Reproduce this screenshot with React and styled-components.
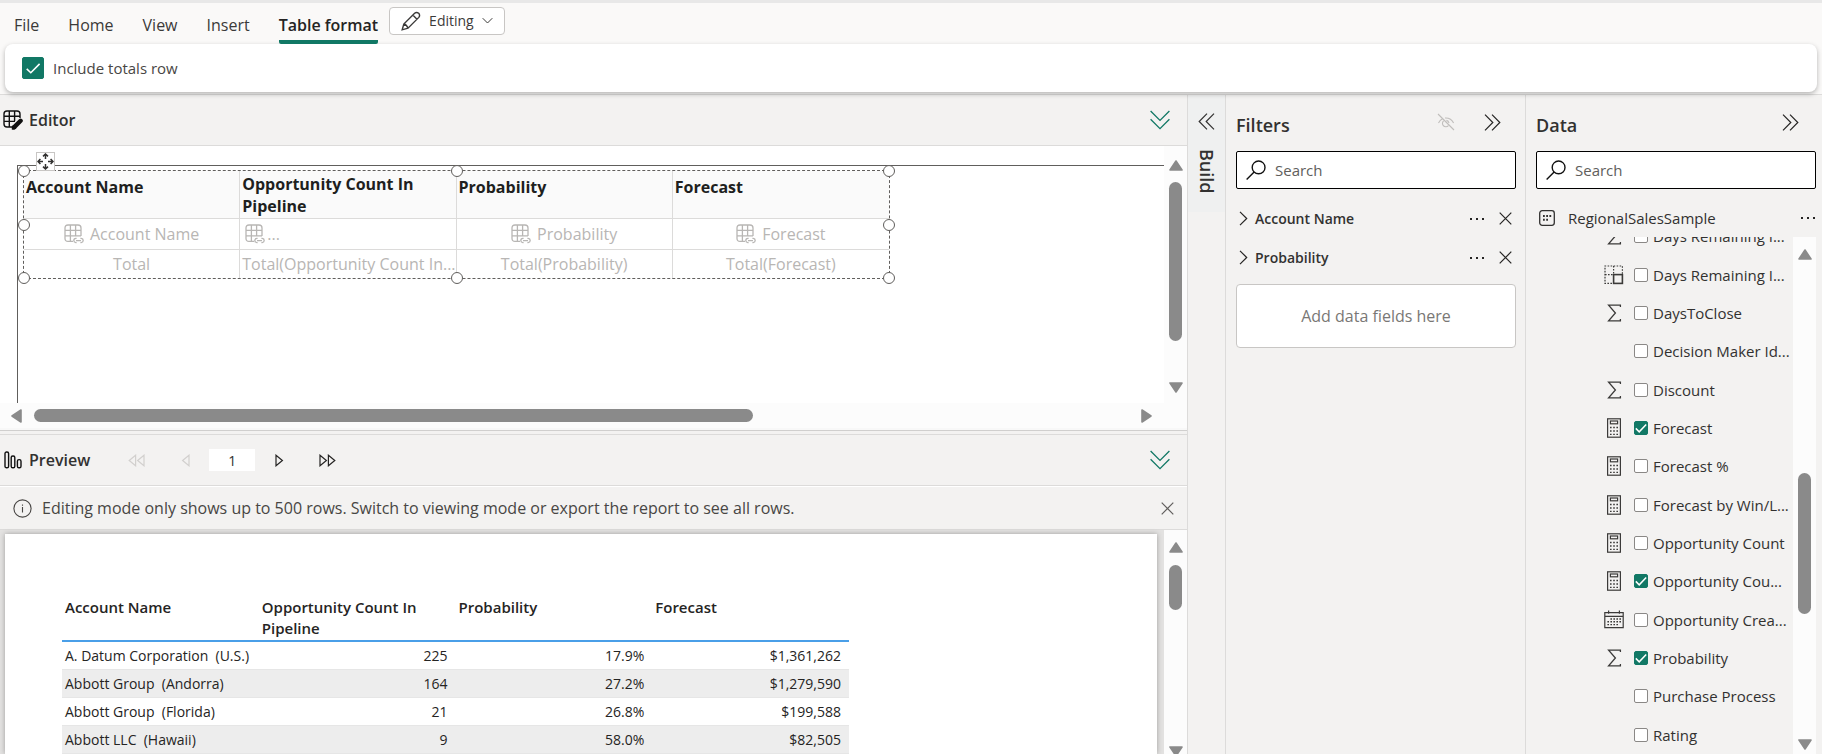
import React from "react";
import styled, { createGlobalStyle, css } from "styled-components";

const GlobalStyle = createGlobalStyle`
  *, *::before, *::after { box-sizing: border-box; }
  html, body, #root { height: 100%; }
  body {
    margin: 0;
    overflow: hidden;
    background: #f3f2f1;
    color: #323130;
    font-family: "Open Sans", "Noto Sans", sans-serif;
    font-size: 15px;
    line-height: 20px;
  }
  button, input { font: inherit; color: inherit; }
  h2, p, ul { margin: 0; padding: 0; }
`;

const line = "#dcdbda";
const green = "#117865";
const thumbGrey = "#8a8a8a";

/* ---------- icons ---------- */

const Icon = styled.svg.attrs({ "aria-hidden": true })`
  display: block;
  flex: none;
  fill: none;
  stroke: currentColor;
`;

const PencilIcon = () => (
  <Icon width="20" height="20" viewBox="0 0 20 20" strokeWidth="1.4">
    <path d="M1.2 18.8 L2.8 13 L13.6 2.2 Q15.6 0.6 17.7 2.3 Q19.4 4.4 17.8 6.4 L7 17.2 Z M11.8 4 L16 8.2 M2.8 13 Q5.8 13.6 7 17.2" />
  </Icon>
);

const ChevronDown = () => (
  <Icon width="11" height="8" viewBox="0 0 11 8" strokeWidth="1">
    <path d="M0.7 1.2 L5.5 6 L10.3 1.2" />
  </Icon>
);

const ChevronRight = () => (
  <Icon width="9" height="15" viewBox="0 0 9 15" strokeWidth="1.2">
    <path d="M1 0.8 L7.7 7.5 L1 14.2" />
  </Icon>
);

const DoubleDown = () => (
  <Icon width="20" height="20" viewBox="0 0 20 20" strokeWidth="1.3">
    <path d="M0.6 1 L10 10.4 L19.4 1 M0.6 9.2 L10 18.6 L19.4 9.2" />
  </Icon>
);

const DoubleRight = () => (
  <Icon width="17" height="17" viewBox="0 0 17 17" strokeWidth="1.2">
    <path d="M1 0.7 L8.8 8.5 L1 16.3 M8 0.7 L15.8 8.5 L8 16.3" />
  </Icon>
);

const DoubleLeft = () => (
  <Icon width="17" height="17" viewBox="0 0 17 17" strokeWidth="1.2">
    <path d="M9 0.7 L1.2 8.5 L9 16.3 M16 0.7 L8.2 8.5 L16 16.3" />
  </Icon>
);

const CloseIcon = () => (
  <Icon width="13" height="13" viewBox="0 0 13 13" strokeWidth="1.2">
    <path d="M0.7 0.7 L12.3 12.3 M12.3 0.7 L0.7 12.3" />
  </Icon>
);

const DotsIcon = () => (
  <Icon width="16" height="4" viewBox="0 0 16 4" strokeWidth="0">
    <g fill="currentColor">
      <rect x="1" y="1" width="2" height="2" />
      <rect x="7" y="1" width="2" height="2" />
      <rect x="13" y="1" width="2" height="2" />
    </g>
  </Icon>
);

const SearchIcon = () => (
  <Icon width="20" height="20" viewBox="0 0 20 20" strokeWidth="1.4">
    <circle cx="12.6" cy="7.4" r="6.4" />
    <path d="M8.1 11.9 L0.6 19.4" />
  </Icon>
);

const EyeOffIcon = () => (
  <Icon width="18" height="18" viewBox="0 0 18 18" strokeWidth="1.1">
    <path d="M1 1 L17 17 M1.5 10 Q3 7 5.6 5.8 M8 5 Q14 4.6 16.6 10 M6.6 7.8 A3.4 3.4 0 1 0 11.4 12.6 M9.4 7.4 A3.3 3.3 0 0 1 12 10" />
  </Icon>
);

const TableEditIcon = () => (
  <Icon width="20" height="20" viewBox="0 0 20 20" strokeWidth="1.4">
    <path d="M10 17 H4 Q1 17 1 14 V4 Q1 1 4 1 H14 Q17 1 17 4 V8 M1 6.2 H17 M1 11.4 H12 M6.3 1 V17 M11.6 1 V11" />
    <path d="M11 17.4 L17.6 10.8" strokeWidth="4.4" strokeLinecap="round" />
    <path d="M9 19.4 L10 15.6 L12.8 18.4 Z" fill="currentColor" strokeWidth="0.6" />
  </Icon>
);

const BarsIcon = () => (
  <Icon width="18" height="18" viewBox="0 0 18 18" strokeWidth="1.4">
    <rect x="1" y="1" width="3.6" height="15.8" rx="1.6" />
    <rect x="7.2" y="5" width="3.6" height="11.8" rx="1.6" />
    <rect x="13.4" y="8.6" width="3.6" height="8.2" rx="1.6" />
  </Icon>
);

const FieldTableIcon = () => (
  <Icon width="20" height="20" viewBox="0 0 20 20" strokeWidth="1.3">
    <path d="M9 17.4 H4 Q1 17.4 1 14.4 V4 Q1 1 4 1 H14 Q17 1 17 4 V12 M1 6.4 H17 M1 11.8 H17 M6.4 1 V17.4 M11.6 1 V12.4" />
    <path d="M12.6 18.6 H11.8 Q9.8 18.4 9.8 16.6 Q9.8 14.6 11.8 14.4 H12.6 M16.4 14.4 H17.2 Q19.2 14.6 19.2 16.6 Q19.2 18.4 17.2 18.6 H16.4 M12 16.6 H17" />
  </Icon>
);

const MoveIcon = () => (
  <Icon width="17" height="17" viewBox="0 0 17 17" strokeWidth="1.5">
    <path d="M8.5 6 V1.4 M6 3.4 L8.5 1 L11 3.4 M8.5 11 V15.6 M6 13.6 L8.5 16 L11 13.6 M6 8.5 H1.4 M3.4 6 L1 8.5 L3.4 11 M11 8.5 H15.6 M13.6 6 L16 8.5 L13.6 11" />
  </Icon>
);

const InfoIcon = () => (
  <Icon width="19" height="19" viewBox="0 0 19 19" strokeWidth="1.1">
    <circle cx="9.5" cy="9.5" r="8.6" />
    <path d="M9.5 8 V13.4 M9.5 5.4 V6.8" />
  </Icon>
);

const StepIcon = ({ back, twice }) => (
  <Icon
    width={twice ? 17 : 9}
    height="13"
    viewBox={twice ? "0 0 17 13" : "0 0 9 13"}
    strokeWidth="1.2"
  >
    <g transform={back ? `translate(${twice ? 17 : 9} 0) scale(-1 1)` : undefined}>
      <path d="M1 1.2 L7.4 6.5 L1 11.8 Z" />
      {twice && <path d="M9.4 1.2 L15.8 6.5 L9.4 11.8 Z" />}
    </g>
  </Icon>
);

const DatasetIcon = () => (
  <Icon width="16" height="16" viewBox="0 0 16 16" strokeWidth="1.3">
    <rect x="0.7" y="0.7" width="14.6" height="14.6" rx="2.5" />
    <path d="M4 6 H12.4 M4 9.8 H9" strokeWidth="2" strokeDasharray="1.8 1.4" />
  </Icon>
);

const SumIcon = () => (
  <Icon width="20" height="20" viewBox="0 0 20 20" strokeWidth="1.3">
    <path d="M16.4 4 V2.2 H4.6 L11.4 10 L4.6 17.8 H16.4 V16" />
  </Icon>
);

const CalcIcon = () => (
  <Icon width="20" height="20" viewBox="0 0 20 20" strokeWidth="1.2">
    <rect x="3.6" y="0.8" width="12.8" height="18.4" />
    <rect x="6.4" y="3" width="7.2" height="2.8" />
    <path d="M6 9.5 H14.4 M6 13 H14.4 M6 16.4 H14.4" strokeDasharray="1.6 1.6" strokeWidth="1.4" />
  </Icon>
);

const CalendarIcon = () => (
  <Icon width="20" height="20" viewBox="0 0 20 20" strokeWidth="1.2">
    <path d="M0.8 2.6 H19.2 V17.6 H0.8 Z M0.8 6.4 H19.2 M4.6 0.6 V3.8 M15.4 0.6 V3.8" />
    <path d="M6.4 9 H17 M3.4 11.8 H17 M3.4 14.6 H14" strokeDasharray="1.6 1.4" strokeWidth="1.4" />
  </Icon>
);

const GroupIcon = () => (
  <Icon width="20" height="20" viewBox="0 0 20 20" strokeWidth="1.2">
    <path d="M8 18.4 H1 V1 H18.4 V9 M9.6 1 V9.6 M1 9.6 H9.6" strokeDasharray="1.6 1.4" />
    <rect x="9.6" y="9.6" width="8.8" height="8.8" strokeWidth="1.6" />
  </Icon>
);

const fieldIcons = { sum: SumIcon, calc: CalcIcon, date: CalendarIcon, group: GroupIcon };

/* ---------- shared controls ---------- */

const IconButton = styled.button`
  display: flex;
  align-items: center;
  justify-content: center;
  padding: 0;
  border: 0;
  background: none;
  color: ${(p) => p.$color || "#252423"};
  cursor: pointer;
`;

const BoxWrap = styled.span`
  display: grid;
  flex: none;
  width: ${(p) => p.$size}px;
  height: ${(p) => p.$size}px;
  > * { grid-area: 1 / 1; }
  > svg { pointer-events: none; stroke: #fff; width: 100%; height: 100%; }
`;

const BoxInput = styled.input`
  appearance: none;
  width: 100%;
  height: 100%;
  margin: 0;
  border: 1px solid #8a8886;
  border-radius: 2px;
  background: #fff;
  &:checked { background: ${green}; border-color: ${green}; }
`;

const Checkbox = ({ id, size, defaultChecked }) => (
  <BoxWrap $size={size}>
    <BoxInput type="checkbox" id={id} defaultChecked={defaultChecked} />
    <Icon viewBox="0 0 14 14" strokeWidth={size > 16 ? 1 : 1.5}>
      <path d={size > 16 ? "M3 7.6 L5.6 10 L11.2 4.4" : "M1.8 7.4 L5.2 10.8 L12.2 3.4"} />
    </Icon>
  </BoxWrap>
);

const Track = styled.div`
  display: flex;
  flex: none;
  align-items: center;
  background: #fcfcfc;
  ${(p) =>
    p.$horizontal
      ? css`
          height: 25px;
          padding: 0 ${p.$end}px 0 ${p.$start}px;
          margin-bottom: 2px;
        `
      : css`
          flex-direction: column;
          width: 23px;
          padding: ${p.$start}px 0 ${p.$end}px;
          margin-bottom: -${p.$overhang || 0}px;
        `}
`;

const Thumb = styled.div`
  flex: none;
  border-radius: 7px;
  background: ${thumbGrey};
  ${(p) =>
    p.$horizontal
      ? css`width: ${p.$size}; height: 13px; margin: 0 auto 0 ${p.$offset}px;`
      : css`width: 13px; height: ${p.$size}px; margin: ${p.$offset}px 0 auto;`}
`;

const arrowPaths = {
  up: "M7 1 L13 10 H1 Z",
  down: "M1 1 H13 L7 10 Z",
  left: "M10 1 V13 L1 7 Z",
  right: "M1 1 V13 L10 7 Z",
};

const Arrow = ({ dir }) => {
  const flat = dir === "up" || dir === "down";
  const w = flat ? 14 : 11;
  const h = flat ? 11 : 14;
  return (
    <Icon width={w} height={h} viewBox={`0 0 ${w} ${h}`}>
      <path d={arrowPaths[dir]} fill={thumbGrey} stroke={thumbGrey} strokeWidth="1.6" strokeLinejoin="round" />
    </Icon>
  );
};

const ScrollBar = ({ horizontal, start, end, offset, size, overhang }) => (
  <Track $horizontal={horizontal} $start={start} $end={end} $overhang={overhang}>
    <Arrow dir={horizontal ? "left" : "up"} />
    <Thumb $horizontal={horizontal} $offset={offset} $size={size} />
    <Arrow dir={horizontal ? "right" : "down"} />
  </Track>
);

/* ---------- ribbon ---------- */

const Page = styled.div`
  display: flex;
  flex-direction: column;
  height: 100vh;
  overflow: hidden;
`;

const Ribbon = styled.header`
  position: relative;
  z-index: 1;
  flex: none;
  padding-bottom: 2px;
  border-top: 3px solid #e8e8e8;
  border-bottom: 1px solid ${line};
  background: #faf9f8;
`;

const MenuBar = styled.nav`
  display: flex;
  align-items: flex-start;
  height: 41px;
  padding-left: 14px;
`;

const MenuItem = styled.button`
  height: 41px;
  margin-right: ${(p) => (p.$active ? 11 : 29)}px;
  padding: 6px 0 0;
  border: 0;
  border-bottom: 4px solid transparent;
  background: none;
  font-size: 16px;
  color: #3b3a39;
  cursor: pointer;
  ${(p) =>
    p.$active &&
    css`
      font-weight: 600;
      color: #252423;
      background: linear-gradient(${green}, ${green}) 0 100% / 100% 4px no-repeat border-box;
      border-radius: 2px;
    `}
`;

const ModeButton = styled.button`
  display: flex;
  align-items: center;
  gap: 8px;
  height: 28px;
  margin-top: 4px;
  padding: 0 11px;
  border: 1px solid #c8c6c4;
  border-radius: 4px;
  background: #fff;
  font-size: 14px;
  color: #3b3a39;
`;

const RibbonCard = styled.div`
  display: flex;
  align-items: center;
  gap: 9px;
  height: 48px;
  margin: 0 5px;
  padding-left: 17px;
  border-radius: 8px;
  background: #fff;
  box-shadow: 0 2px 5px rgba(0, 0, 0, 0.28);
  color: #484644;
`;

/* ---------- work area ---------- */

const Work = styled.div`
  display: flex;
  flex: 1;
  min-height: 0;
`;

const Center = styled.main`
  display: flex;
  flex: 1;
  flex-direction: column;
  min-width: 0;
  border-right: 1px solid ${line};
`;

const PaneHeader = styled.div`
  display: flex;
  flex: none;
  align-items: center;
  height: 51px;
  padding: 0 17px 0 3px;
  border-bottom: 1px solid ${line};
`;

const PaneTitle = styled.h2`
  display: flex;
  align-items: center;
  gap: 6px;
  margin-right: ${(p) => p.$after || 0}px;
  font-size: 16px;
  font-weight: 600;
  > svg { width: 20px; color: #111; }
`;

const Push = styled.div`
  margin-left: auto;
`;

const EditorPane = styled.section`
  display: flex;
  flex: none;
  flex-direction: column;
  height: 285px;
  border-bottom: 1px solid #d0cfce;
  background: #f8f8f8;
`;

const EditorBody = styled.div`
  display: flex;
  flex: 1;
  min-height: 0;
  background: #fff;
`;

const Sheet = styled.div`
  flex: 1;
  min-width: 0;
  margin: 19px 0 0 17px;
  padding: 4px 0 0 5px;
  border-top: 1px solid #605e5c;
  border-left: 1px solid #605e5c;
`;

const Selection = styled.div`
  position: relative;
  width: 867px;
  border: 1px dashed #605e5c;
`;

const Handle = styled.span`
  position: absolute;
  left: ${(p) => p.$x}%;
  top: ${(p) => p.$y}%;
  width: 12px;
  height: 12px;
  margin: -6px;
  border: 1px solid #605e5c;
  border-radius: 50%;
  background: #fff;
`;

const MoveGrip = styled.button`
  position: absolute;
  bottom: 100%;
  left: 12px;
  display: grid;
  place-items: center;
  width: 19px;
  height: 19px;
  padding: 0;
  border: 1px solid #c8c6c4;
  background: #fff;
`;

const DesignTable = styled.table`
  width: 100%;
  table-layout: fixed;
  border-collapse: separate;
  border-spacing: 0;
  font-size: 16px;
  color: #b8b6b4;
  th, td {
    padding: 0 2px;
    border-right: 1px solid ${line};
    border-bottom: 1px solid ${line};
    white-space: nowrap;
    text-align: center;
  }
  th {
    height: 48px;
    background: #fafafa;
    color: #201f1e;
    font-weight: 700;
    line-height: 22px;
    text-align: left;
    vertical-align: top;
    white-space: normal;
  }
  td { height: 31px; }
  tr:last-child td { height: 28px; border-bottom: 0; }
  tr > :last-child { border-right: 0; }
`;

const HeadText = styled.div`
  padding-top: ${(p) => (p.$tall ? 2 : 5)}px;
`;

const FieldTag = styled.div`
  display: flex;
  align-items: center;
  justify-content: ${(p) => (p.$left ? "flex-start" : "center")};
  gap: ${(p) => (p.$left ? 2 : 6)}px;
  padding-left: ${(p) => (p.$left ? 3 : 0)}px;
`;

const PreviewPane = styled.section`
  display: flex;
  flex: 1;
  flex-direction: column;
  min-height: 0;
  margin-top: 3px;
  border-top: 1px solid ${line};
`;

const Pager = styled.div`
  display: flex;
  align-items: center;
`;

const PagerButton = styled(IconButton)`
  height: 24px;
  margin-right: ${(p) => p.$after}px;
  &:disabled { color: #d2d0ce; }
`;

const PageInput = styled.input`
  width: 46px;
  height: 22px;
  margin-right: 20px;
  padding: 0;
  border: 0;
  background: #fff;
  font-size: 14px;
  text-align: center;
`;

const Notice = styled.div`
  display: flex;
  flex: none;
  align-items: center;
  gap: 10px;
  height: 44px;
  padding: 0 13px;
  border-top: 1px solid #fff;
  border-bottom: 1px solid ${line};
  font-size: 16px;
  color: #484644;
`;

const PreviewBody = styled.div`
  display: flex;
  flex: 1;
  min-height: 0;
  background: #e3e2e1;
`;

const Paper = styled.div`
  flex: 1;
  min-width: 0;
  margin: 4px 7px 0 5px;
  padding: 63px 0 0 57px;
  background: #fff;
  box-shadow: 0 0 5px rgba(0, 0, 0, 0.3);
`;

const ReportTable = styled.table`
  width: 787px;
  table-layout: fixed;
  border-collapse: separate;
  border-spacing: 0;
  font-size: 14px;
  color: #252423;
  th {
    height: 45px;
    padding: 0 3px;
    border-bottom: 2px solid #4a9fe8;
    font-size: 15px;
    line-height: 21px;
    font-weight: 600;
    text-align: left;
    vertical-align: top;
  }
  td {
    height: 28px;
    padding: 0 8px 0 3px;
    border-bottom: 1px solid #e6e6e6;
    line-height: 20px;
    text-align: right;
    white-space: pre;
  }
  td:first-child { text-align: left; }
  tbody tr:nth-child(even) { background: #ededed; }
`;

/* ---------- side panels ---------- */

const BuildRail = styled.aside`
  flex: none;
  width: 38px;
  border-right: 1px solid ${line};
`;

const BuildTab = styled.button`
  display: flex;
  flex-direction: column;
  align-items: center;
  gap: 19px;
  width: 37px;
  height: 117px;
  padding: 18px 0 0;
  border: 0;
  background: #eff0f0;
  > span {
    writing-mode: vertical-rl;
    font-size: 18px;
    font-weight: 600;
  }
`;

const Panel = styled.aside`
  display: flex;
  flex: none;
  flex-direction: column;
  width: ${(p) => p.$width}px;
  min-height: 0;
  padding: 0 ${(p) => p.$right}px 0 10px;
  border-right: ${(p) => (p.$line ? `1px solid ${line}` : 0)};
`;

const PanelHeader = styled.div`
  display: flex;
  flex: none;
  align-items: center;
  gap: 29px;
  height: 56px;
  padding: 4px ${(p) => p.$right}px 0 0;
  > h2 {
    margin-right: auto;
    font-size: 18px;
    font-weight: 600;
  }
  > button { margin-bottom: 6px; }
`;

const SearchBox = styled.label`
  display: flex;
  flex: none;
  align-items: center;
  gap: 9px;
  height: 38px;
  padding-left: 9px;
  border: 1px solid #000;
  border-radius: 2px;
  background: #fff;
  color: #111;
  > input {
    flex: 1;
    min-width: 0;
    border: 0;
    padding: 0;
    outline: 0;
    background: none;
  }
  > input::placeholder { color: #605e5c; opacity: 1; }
`;

const FilterRow = styled.div`
  display: flex;
  flex: none;
  align-items: center;
  height: 39px;
  padding: 0 4px 0 3px;
  font-size: 14px;
  font-weight: 600;
  > :nth-child(2) { margin: 0 auto 0 7px; }
  > :last-child { margin-left: 14px; }
`;

const FilterList = styled.div`
  padding: 10px 0 7px;
`;

const DropZone = styled.div`
  display: grid;
  flex: none;
  place-items: center;
  height: 64px;
  border: 1px solid #c8c6c4;
  border-radius: 4px;
  background: #fff;
  font-size: 16px;
  color: #797775;
`;

const ModelRow = styled.div`
  display: flex;
  flex: none;
  align-items: center;
  height: 48px;
  padding: 10px 0 0 3px;
  > span { margin: 0 auto 0 13px; }
`;

const FieldArea = styled.div`
  display: flex;
  flex: 1;
  min-height: 0;
  overflow: hidden;
`;

const FieldList = styled.ul`
  display: flex;
  flex: 1;
  flex-direction: column;
  min-width: 0;
  margin-top: -20px;
  padding-left: 68px;
  list-style: none;
`;

const FieldRow = styled.li`
  display: flex;
  flex: 1 0 38px;
  align-items: center;
  white-space: nowrap;
  > label { padding-left: 5px; }
`;

const IconSlot = styled.span`
  flex: none;
  width: 30px;
  color: #3b3a39;
`;

/* ---------- data ---------- */

const menus = ["File", "Home", "View", "Insert", "Table format"];
const columns = ["Account Name", "Opportunity Count In Pipeline", "Probability", "Forecast"];
const designFields = ["Account Name", "...", "Probability", "Forecast"];
const designTotals = ["Total", "Total(Opportunity Count In...", "Total(Probability)", "Total(Forecast)"];
const rows = [
  ["A. Datum Corporation  (U.S.)", "225", "17.9%", "$1,361,262"],
  ["Abbott Group  (Andorra)", "164", "27.2%", "$1,279,590"],
  ["Abbott Group  (Florida)", "21", "26.8%", "$199,588"],
  ["Abbott LLC  (Hawaii)", "9", "58.0%", "$82,505"],
];
const handles = [[0, 0], [50, 0], [100, 0], [0, 50], [100, 50], [0, 100], [50, 100], [100, 100]];
const fields = [
  ["Days Remaining I...", "sum"],
  ["Days Remaining I...", "group"],
  ["DaysToClose", "sum"],
  ["Decision Maker Id...", null],
  ["Discount", "sum"],
  ["Forecast", "calc", true],
  ["Forecast %", "calc"],
  ["Forecast by Win/L...", "calc"],
  ["Opportunity Count", "calc"],
  ["Opportunity Cou...", "calc", true],
  ["Opportunity Crea...", "date"],
  ["Probability", "sum", true],
  ["Purchase Process", null],
  ["Rating", null],
];

export default function App() {
  return (
    <Page>
      <GlobalStyle />
      <Ribbon>
        <MenuBar>
          {menus.map((m) => (
            <MenuItem key={m} $active={m === "Table format"}>{m}</MenuItem>
          ))}
          <ModeButton>
            <PencilIcon />
            Editing
            <ChevronDown />
          </ModeButton>
        </MenuBar>
        <RibbonCard>
          <Checkbox id="totals" size={22} defaultChecked />
          <label htmlFor="totals">Include totals row</label>
        </RibbonCard>
      </Ribbon>

      <Work>
        <Center>
          <PaneHeader>
            <PaneTitle><TableEditIcon />Editor</PaneTitle>
            <Push>
              <IconButton aria-label="Collapse editor" $color={green}><DoubleDown /></IconButton>
            </Push>
          </PaneHeader>
          <EditorPane>
            <EditorBody>
              <Sheet>
                <Selection>
                  <DesignTable>
                    <thead>
                      <tr>
                        {columns.map((c, i) => (
                          <th key={c}><HeadText $tall={i === 1}>{c}</HeadText></th>
                        ))}
                      </tr>
                    </thead>
                    <tbody>
                      <tr>
                        {designFields.map((f, i) => (
                          <td key={f}><FieldTag $left={i === 1}><FieldTableIcon />{f}</FieldTag></td>
                        ))}
                      </tr>
                      <tr>
                        {designTotals.map((t) => <td key={t}>{t}</td>)}
                      </tr>
                    </tbody>
                  </DesignTable>
                  <MoveGrip aria-label="Move table"><MoveIcon /></MoveGrip>
                  {handles.map(([x, y]) => <Handle key={`${x}-${y}`} $x={x} $y={y} />)}
                </Selection>
              </Sheet>
              <ScrollBar start={14} end={10} offset={11} size={159} />
            </EditorBody>
            <ScrollBar horizontal start={11} end={35} offset={12} size="63%" />
          </EditorPane>

          <PreviewPane>
            <PaneHeader>
              <PaneTitle $after={38}><BarsIcon />Preview</PaneTitle>
              <Pager>
                <PagerButton aria-label="First page" disabled $after={36}><StepIcon back twice /></PagerButton>
                <PagerButton aria-label="Previous page" disabled $after={19}><StepIcon back /></PagerButton>
                <PageInput aria-label="Page number" defaultValue="1" />
                <PagerButton aria-label="Next page" $after={35}><StepIcon /></PagerButton>
                <PagerButton aria-label="Last page" $after={0}><StepIcon twice /></PagerButton>
              </Pager>
              <Push>
                <IconButton aria-label="Collapse preview" $color={green}><DoubleDown /></IconButton>
              </Push>
            </PaneHeader>
            <Notice>
              <InfoIcon />
              <p>Editing mode only shows up to 500 rows. Switch to viewing mode or export the report to see all rows.</p>
              <Push>
                <IconButton aria-label="Dismiss" $color="#605e5c"><CloseIcon /></IconButton>
              </Push>
            </Notice>
            <PreviewBody>
              <Paper>
                <ReportTable>
                  <thead>
                    <tr>{columns.map((c) => <th key={c}>{c}</th>)}</tr>
                  </thead>
                  <tbody>
                    {rows.map((r) => (
                      <tr key={r[0]}>{r.map((v) => <td key={v}>{v}</td>)}</tr>
                    ))}
                  </tbody>
                </ReportTable>
              </Paper>
              <ScrollBar start={12} end={13} offset={12} size={45} overhang={16} />
            </PreviewBody>
          </PreviewPane>
        </Center>

        <BuildRail>
          <BuildTab>
            <DoubleLeft />
            <span>Build</span>
          </BuildTab>
        </BuildRail>

        <Panel $width={300} $right={9} $line>
          <PanelHeader $right={15}>
            <h2>Filters</h2>
            <IconButton aria-label="Hide filters" $color="#c0bebc"><EyeOffIcon /></IconButton>
            <IconButton aria-label="Collapse filters"><DoubleRight /></IconButton>
          </PanelHeader>
          <SearchBox>
            <SearchIcon />
            <input type="text" placeholder="Search" aria-label="Search filters" />
          </SearchBox>
          <FilterList>
            {["Account Name", "Probability"].map((f) => (
              <FilterRow key={f}>
                <IconButton aria-label={`Expand ${f}`}><ChevronRight /></IconButton>
                <span>{f}</span>
                <IconButton aria-label={`More options for ${f}`}><DotsIcon /></IconButton>
                <IconButton aria-label={`Remove ${f}`}><CloseIcon /></IconButton>
              </FilterRow>
            ))}
          </FilterList>
          <DropZone>Add data fields here</DropZone>
        </Panel>

        <Panel $width={296} $right={6}>
          <PanelHeader $right={17}>
            <h2>Data</h2>
            <IconButton aria-label="Collapse data"><DoubleRight /></IconButton>
          </PanelHeader>
          <SearchBox>
            <SearchIcon />
            <input type="text" placeholder="Search" aria-label="Search data" />
          </SearchBox>
          <ModelRow>
            <DatasetIcon />
            <span>RegionalSalesSample</span>
            <IconButton aria-label="More options for RegionalSalesSample"><DotsIcon /></IconButton>
          </ModelRow>
          <FieldArea>
            <FieldList>
              {fields.map(([name, kind, on], i) => {
                const Kind = fieldIcons[kind];
                return (
                  <FieldRow key={i}>
                    <IconSlot>{Kind && <Kind />}</IconSlot>
                    <Checkbox id={`field-${i}`} size={14} defaultChecked={on} />
                    <label htmlFor={`field-${i}`}>{name}</label>
                  </FieldRow>
                );
              })}
            </FieldList>
            <ScrollBar start={12} end={4} offset={213} size={141} />
          </FieldArea>
        </Panel>
      </Work>
    </Page>
  );
}
